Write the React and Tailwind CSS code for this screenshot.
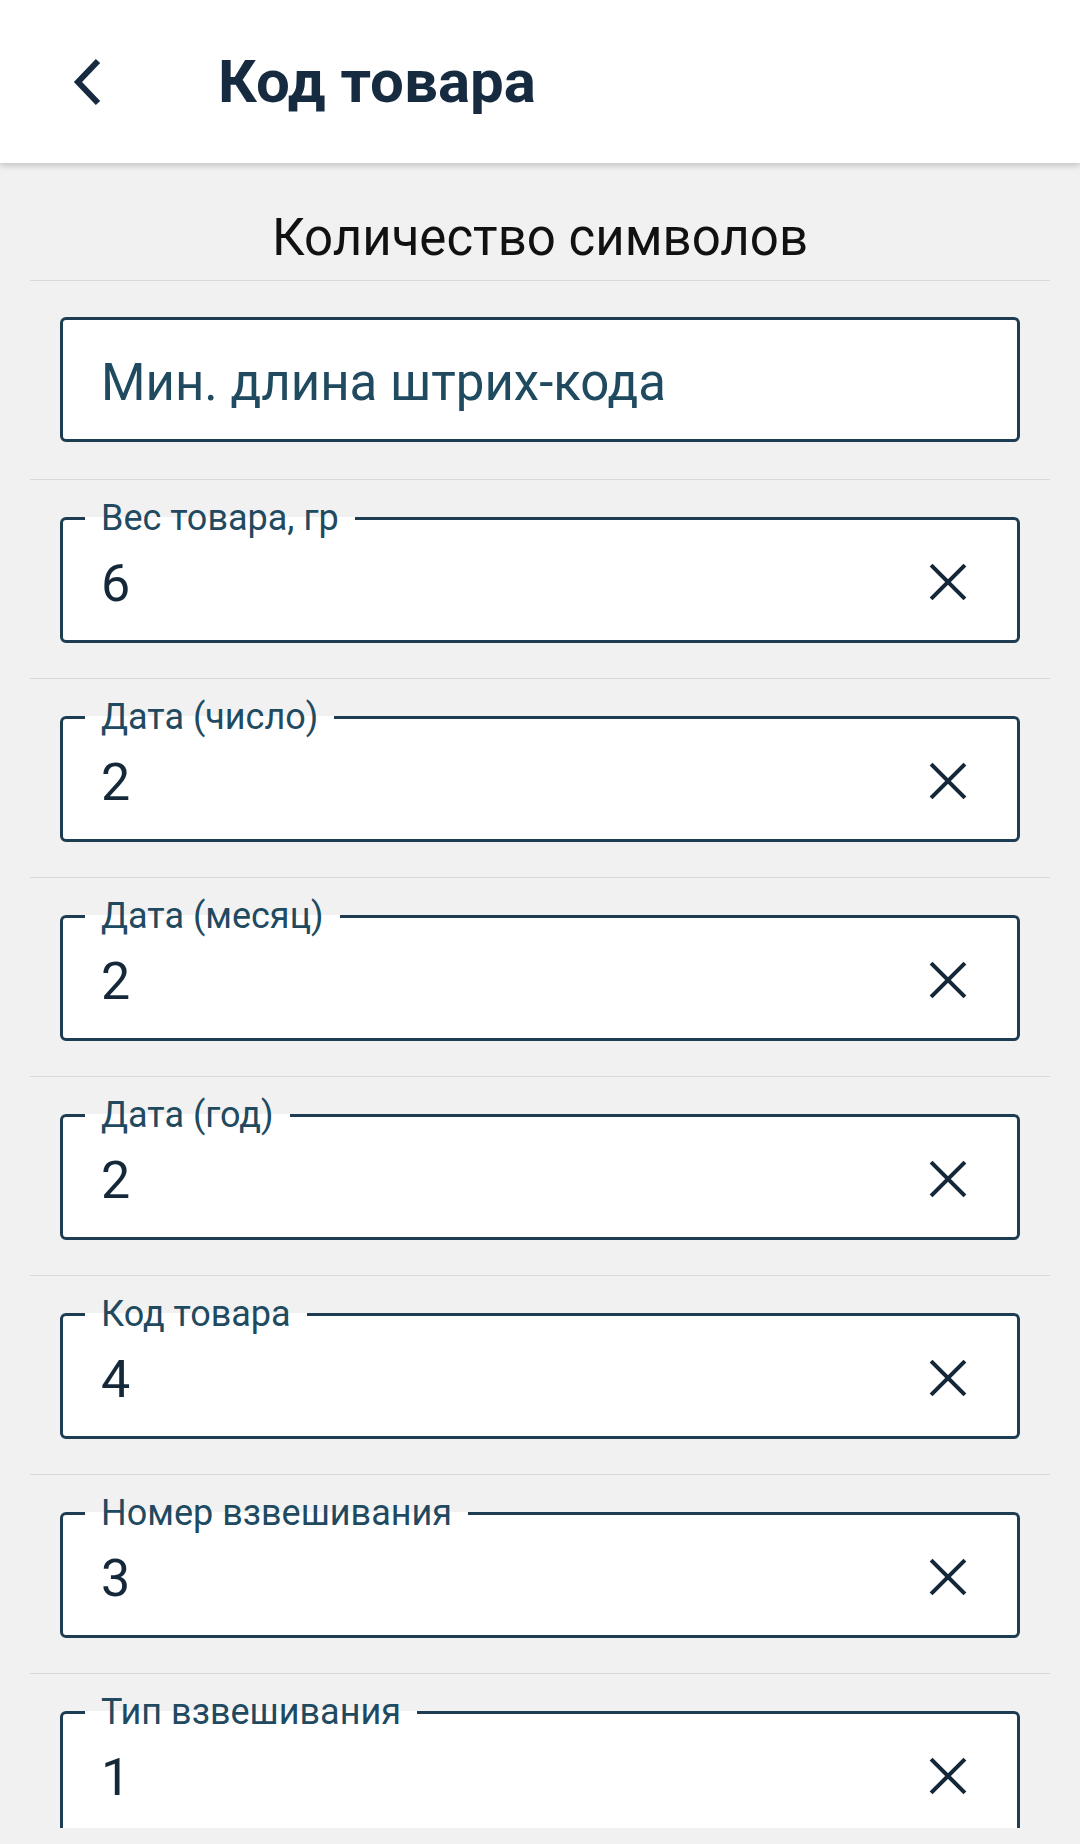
import React from 'react';

const FIELDS = [
  { label: 'Вес товара, гр', value: '6' },
  { label: 'Дата (число)', value: '2' },
  { label: 'Дата (месяц)', value: '2' },
  { label: 'Дата (год)', value: '2' },
  { label: 'Код товара', value: '4' },
  { label: 'Номер взвешивания', value: '3' },
  { label: 'Тип взвешивания', value: '1' },
];

function CloseIcon() {
  return (
    <svg viewBox="0 0 24 24" className="w-[58px] h-[58px] shrink-0 mb-[5px]" fill="none">
      <path d="M5 5L19 19M19 5L5 19" stroke="#15283a" strokeWidth="1.7" />
    </svg>
  );
}

function Divider() {
  return <div className="h-px bg-[#d9d9d9]" />;
}

function LabeledField({ label, value }) {
  return (
    <div className="pt-[20px] pb-[35px] px-[30px]">
      <fieldset className="border-[3px] border-[#1e3d52] rounded-[6px] bg-white">
        <legend className="ml-[22px] px-[16px] text-[36px] leading-[36px] text-[#1f4a5f]">{label}</legend>
        <div className="h-[104px] pb-[8px] pl-[38px] pr-[40px] flex items-center justify-between">
          <span className="text-[52px] leading-[60px] text-[#15283a]">{value}</span>
          <CloseIcon />
        </div>
      </fieldset>
    </div>
  );
}

export default function App() {
  return (
    <div
      className="w-[1080px] h-[1844px] bg-[#f1f1f1] flex flex-col overflow-hidden"
      style={{ fontFamily: 'Roboto, "Noto Sans", sans-serif' }}
    >
      <header className="relative z-10 h-[163px] shrink-0 bg-white flex items-center shadow-[0_3px_6px_rgba(0,0,0,0.18)]">
        <svg viewBox="0 0 32 50" className="ml-[72px] w-[32px] h-[50px]" fill="none">
          <polyline points="26,4 6,25 26,46" stroke="#172b40" strokeWidth="6" />
        </svg>
        <h1 className="ml-[114px] text-[60px] leading-[70px] font-bold text-[#172b40]">Код товара</h1>
      </header>

      <main className="flex-1 overflow-hidden">
        <div className="mx-[30px]">
          <div className="pt-[45px] pb-[12px] text-center text-[51px] leading-[60px] text-[#111]">
            Количество символов
          </div>
          <Divider />
          <div className="pt-[36px] pb-[37px] px-[30px]">
            <div className="h-[125px] border-[3px] border-[#1e3d52] rounded-[6px] bg-white flex items-center pl-[38px] pt-[6px]">
              <span className="text-[51px] leading-[60px] text-[#1f4a5f]">Мин. длина штрих-кода</span>
            </div>
          </div>
          {FIELDS.map((f) => (
            <div key={f.label}>
              <Divider />
              <LabeledField label={f.label} value={f.value} />
            </div>
          ))}
        </div>
      </main>

      <div className="h-[16px] shrink-0 bg-[#f1f1f1]" />
    </div>
  );
}
